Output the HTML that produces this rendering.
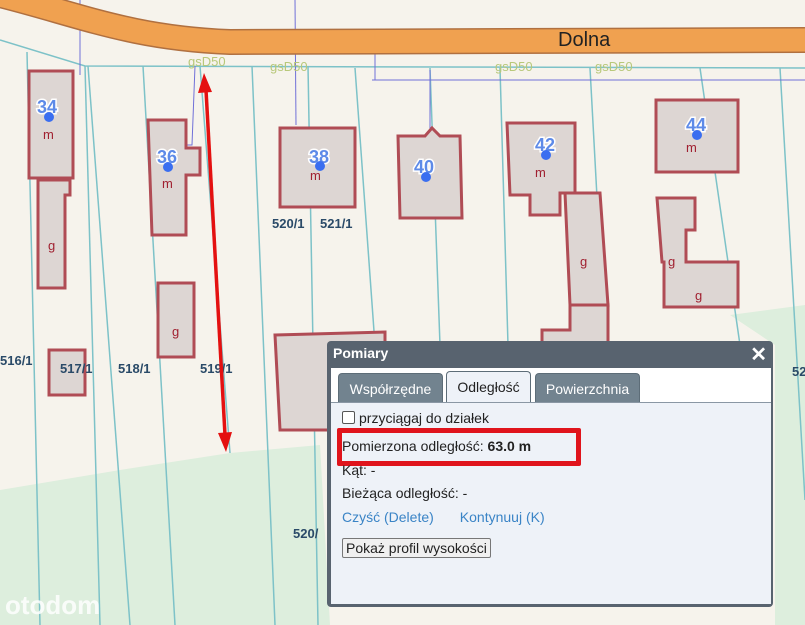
<!DOCTYPE html>
<html><head><meta charset="utf-8"><style>
body{margin:0;width:805px;height:625px;overflow:hidden;font-family:"Liberation Sans",Arial,sans-serif;position:relative;background:#f6f3ec}
svg{position:absolute;left:0;top:0}
.dlg{position:absolute;left:327px;top:341px;width:446px;height:266px;background:#58636f;border-radius:4px}
.hd{position:absolute;left:6px;top:4px;color:#fff;font-weight:bold;font-size:14px}
.x{position:absolute;right:6px;top:1px;color:#fff;font-weight:bold;font-size:20px}
.body{position:absolute;left:4px;top:27px;width:440px;height:236px;background:#eef2f8}
.tabs{position:absolute;left:0;top:0;width:440px;height:34px;background:#fff;border-bottom:1px solid #8a97a4}
.tab{position:absolute;top:5px;height:28px;line-height:30px;font-size:14px;color:#fff;background:#72838f;border:1px solid #5d6d78;border-bottom:none;border-radius:4px 4px 0 0;text-align:center}
.tab.on{background:#eef2f8;color:#222;height:30px;top:3px}
.c{position:absolute;left:11px;font-size:14px;color:#222}
a{color:#3a84c6;text-decoration:none}
</style></head><body>
<svg width="805" height="625">
<polygon points="0,490 120,470 230,453 320,445 330,625 0,625" fill="#ddeedd"/>
<polygon points="730,315 805,305 805,625 775,625 775,345" fill="#ddeedd"/>
<g stroke="#7dc2c8" stroke-width="1.5" fill="none">
<polyline points="0,40 85,66 805,68"/>
<line x1="27" y1="52" x2="40" y2="625"/><line x1="85" y1="66" x2="100" y2="625"/>
<line x1="88" y1="66" x2="130" y2="625"/><line x1="143" y1="66" x2="175" y2="625"/>
<line x1="252" y1="66" x2="275" y2="625"/><line x1="308" y1="66" x2="318" y2="625"/>
<line x1="355" y1="68" x2="375" y2="345"/><line x1="430" y1="68" x2="440" y2="345"/>
<line x1="500" y1="68" x2="508" y2="345"/><line x1="590" y1="68" x2="605" y2="345"/>
<line x1="700" y1="68" x2="740" y2="345"/><line x1="780" y1="68" x2="805" y2="500"/>
<line x1="200" y1="66" x2="230" y2="453"/>
</g>
<g stroke="#7070d8" stroke-width="1" fill="none">
<line x1="80" y1="0" x2="80" y2="75"/><polyline points="195,66 192,145 185,145"/>
<line x1="295" y1="0" x2="296" y2="125"/><line x1="375" y1="45" x2="375" y2="80"/><polyline points="372,80 805,80"/>
<line x1="430" y1="70" x2="430" y2="130"/>
</g>
<path d="M0,-5 C80,15 130,38 230,42 L805,40" stroke="#b07040" stroke-width="26" fill="none"/>
<path d="M0,-5 C80,15 130,38 230,42 L805,40" stroke="#f0a150" stroke-width="23" fill="none"/>
<text x="558" y="46" font-size="20" fill="#222">Dolna</text>
<g font-size="13" fill="#b8c87a"><text x="188" y="66">gsD50</text><text x="270" y="71">gsD50</text><text x="495" y="71">gsD50</text><text x="595" y="71">gsD50</text></g>
<g fill="#ddd6d3" stroke="#b04c55" stroke-width="3">
<rect x="29" y="71" width="44" height="107"/><polygon points="38,180 70,180 70,195 65,195 65,288 42,288 38,288"/>
<polygon points="148,120 186,120 186,148 200,148 200,175 186,175 186,235 152,235"/>
<rect x="158" y="283" width="36" height="74"/>
<rect x="280" y="128" width="75" height="79"/>
<polygon points="398,136 425,136 432,128 440,136 460,136 462,218 400,218"/>
<polygon points="507,123 575,123 575,193 560,193 560,215 530,215 530,195 510,195"/>
<polygon points="565,193 600,193 608,305 570,305"/>
<rect x="656" y="100" width="82" height="72"/>
<polygon points="657,198 695,198 695,230 686,230 686,262 738,262 738,307 664,307 664,262 662,262"/>
<rect x="49" y="350" width="36" height="45"/>
<polygon points="275,335 385,332 385,345 330,345 330,430 280,430"/>
<polygon points="542,330 570,330 570,305 608,305 608,345 542,345"/>
</g>
<g font-size="13" fill="#a02030"><text x="43" y="139">m</text><text x="162" y="188">m</text><text x="310" y="180">m</text><text x="535" y="177">m</text><text x="686" y="152">m</text>
<text x="48" y="250">g</text><text x="172" y="336">g</text><text x="580" y="266">g</text><text x="668" y="266">g</text><text x="695" y="300">g</text></g>
<g font-size="18" font-weight="bold" fill="#5d8ae8" stroke="#fff" stroke-width="3" paint-order="stroke"><text x="37" y="113">34</text><text x="157" y="163">36</text><text x="309" y="163">38</text><text x="414" y="173">40</text><text x="535" y="151">42</text><text x="686" y="131">44</text></g>
<g fill="#3a6ef0"><circle cx="49" cy="117" r="5"/><circle cx="168" cy="167" r="5"/><circle cx="320" cy="166" r="5"/><circle cx="426" cy="177" r="5"/><circle cx="546" cy="155" r="5"/><circle cx="697" cy="135" r="5"/></g>
<g font-size="13" font-weight="bold" fill="#2a4a68"><text x="0" y="365">516/1</text><text x="60" y="373">517/1</text><text x="118" y="373">518/1</text><text x="200" y="373">519/1</text><text x="272" y="228">520/1</text><text x="320" y="228">521/1</text><text x="293" y="538">520/</text><text x="792" y="376">52</text></g>
<line x1="206" y1="90" x2="225" y2="435" stroke="#e41010" stroke-width="3.5"/>
<polygon points="204,73 198,93 212,92" fill="#e41010"/><polygon points="226,452 218,433 232,432" fill="#e41010"/>
<text x="5" y="614" font-size="26" fill="#fff" opacity="0.85" font-weight="bold">otodom</text>
</svg>
<div class="dlg"><div class="hd">Pomiary</div><div class="x">✕</div>
<div class="body">
<div class="tabs">
<div class="tab" style="left:7px;width:103px">Współrzędne</div>
<div class="tab on" style="left:115px;width:83px">Odległość</div>
<div class="tab" style="left:204px;width:103px">Powierzchnia</div>
</div>
<div class="c" style="top:42px"><span style="display:inline-block;width:11px;height:11px;border:1px solid #555;border-radius:2px;background:#fff;vertical-align:-1px;margin-right:4px"></span>przyciągaj do działek</div>
<div style="position:absolute;left:6px;top:60px;width:244px;height:38px;border:5px solid #e0141c;box-sizing:border-box;border-radius:2px"></div>
<div class="c" style="top:70px">Pomierzona odległość: <b>63.0 m</b></div>
<div class="c" style="top:94px">Kąt: -</div>
<div class="c" style="top:117px">Bieżąca odległość: -</div>
<div class="c" style="top:141px"><a>Czyść (Delete)</a><a style="margin-left:26px">Kontynuuj (K)</a></div>
<div class="c" style="top:170px;border:1px solid #777;background:#f0f0f0;padding:1px 3px;border-radius:2px">Pokaż profil wysokości</div>
</div></div>
</body></html>
